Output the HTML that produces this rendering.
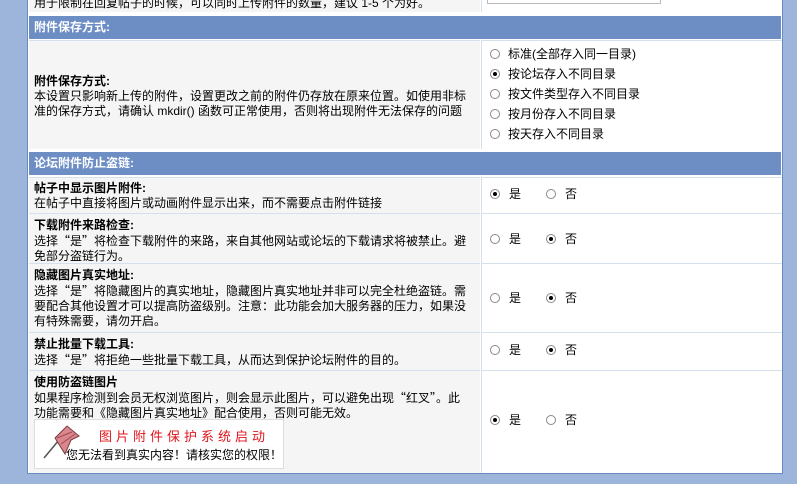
<!DOCTYPE html>
<html><head><meta charset="utf-8"><style>
body{margin:0;width:797px;height:484px;background:#9db5da;font-family:"Liberation Sans","Noto Sans CJK SC","WenQuanYi Zen Hei",sans-serif;font-size:12px;color:#000;position:relative;overflow:hidden}
.tbl{position:absolute;left:27px;top:-2px;width:754px;height:474px;background:#fff;border:1px solid #6a8ac2}
.h{position:absolute;left:1px;width:752px;height:23px;background:#6c8ec5;color:#fff;font-weight:bold;line-height:23px;text-indent:5px;font-size:12px}
.l{position:absolute;left:1px;width:451px;background:#f5f5f5;border-top:1px solid #d5dfee}
.r{position:absolute;left:453px;width:300px;background:#fff;border-top:1px solid #d5dfee;border-left:1px solid #d5dfee}
.t{position:absolute;left:5px;line-height:15px;width:438px}
.q{font-family:"Noto Sans CJK SC",sans-serif}
b{font-weight:bold}
.rd{position:absolute;width:10px;height:10px;border-radius:50%;border:1px solid #888;background:#fff;box-sizing:border-box}
.rd.on::after{content:"";position:absolute;left:2px;top:2px;width:4px;height:4px;border-radius:50%;background:#000}
.lb{position:absolute;line-height:15px}
</style></head><body>
<div class="tbl">
 <div class="l" style="top:0;height:13px;border:0"><div class="t" style="top:-3px">用于限制在回复帖子的时候，可以同时上传附件的数量，建议 1-5 个为好。</div></div>
 <div class="r" style="top:0;height:13px;border-top:0"><div style="position:absolute;left:5px;top:0;width:172px;height:4px;border:1px solid #bbb;border-top:0"></div></div>
 <div class="h" style="top:17px">附件保存方式:</div>
 <div class="l" style="top:41px;height:108px"><div class="t" style="top:33px"><b>附件保存方式:</b><br>本设置只影响新上传的附件，设置更改之前的附件仍存放在原来位置。如使用非标准的保存方式，请确认 mkdir() 函数可正常使用，否则将出现附件无法保存的问题</div></div>
 <div class="r" style="top:41px;height:108px"></div>
 <div class="h" style="top:153px">论坛附件防止盗链:</div>
 <div class="l" style="top:178px;height:35px"><div class="t" style="top:3px"><b>帖子中显示图片附件:</b><br>在帖子中直接将图片或动画附件显示出来，而不需要点击附件链接</div></div>
 <div class="r" style="top:178px;height:35px"></div>
 <div class="l" style="top:214px;height:49px"><div class="t" style="top:4px"><b>下载附件来路检查:</b><br>选择<span class="q">“是”</span>将检查下载附件的来路，来自其他网站或论坛的下载请求将被禁止。避免部分盗链行为。</div></div>
 <div class="r" style="top:214px;height:49px"></div>
 <div class="l" style="top:264px;height:68px"><div class="t" style="top:4px"><b>隐藏图片真实地址:</b><br>选择<span class="q">“是”</span>将隐藏图片的真实地址，隐藏图片真实地址并非可以完全杜绝盗链。需要配合其他设置才可以提高防盗级别。注意：此功能会加大服务器的压力，如果没有特殊需要，请勿开启。</div></div>
 <div class="r" style="top:264px;height:68px"></div>
 <div class="l" style="top:333px;height:37px"><div class="t" style="top:4px"><b>禁止批量下载工具:</b><br>选择<span class="q">“是”</span>将拒绝一些批量下载工具，从而达到保护论坛附件的目的。</div></div>
 <div class="r" style="top:333px;height:37px"></div>
 <div class="l" style="top:371px;height:102px"><div class="t" style="top:4px"><b>使用防盗链图片</b><br>如果程序检测到会员无权浏览图片，则会显示此图片，可以避免出现<span class="q">“红叉”</span>。此功能需要和《隐藏图片真实地址》配合使用，否则可能无效。</div>
  <div style="position:absolute;left:5px;top:48px;width:248px;height:48px;background:#fff;border:1px solid #ddd">
   <svg style="position:absolute;left:6px;top:4px" width="40" height="40" viewBox="0 0 40 40"><path d="M3 34 L18 16" stroke="#555" stroke-width="1.5"/><path d="M14 14 L26 2 L38 12 L30 16 L24 30 Z" fill="#d9868c" stroke="#7a3b40"/><path d="M16 14 L31 8 M20 20 L34 10" stroke="#a14b53"/></svg>
   <div style="position:absolute;left:64px;top:6px;color:#e0141c;font-size:13px;letter-spacing:4px">图片附件保护系统启动</div>
   <div style="position:absolute;left:31px;top:26px;font-size:12px">您无法看到真实内容！请核实您的权限！</div>
  </div></div>
 <div class="r" style="top:371px;height:102px"></div>
</div>
<div class="rd" style="left:490px;top:49px"></div><div class="lb" style="left:508px;top:47px">标准(全部存入同一目录)</div>
<div class="rd on" style="left:490px;top:69px"></div><div class="lb" style="left:508px;top:67px">按论坛存入不同目录</div>
<div class="rd" style="left:490px;top:89px"></div><div class="lb" style="left:508px;top:87px">按文件类型存入不同目录</div>
<div class="rd" style="left:490px;top:109px"></div><div class="lb" style="left:508px;top:107px">按月份存入不同目录</div>
<div class="rd" style="left:490px;top:129px"></div><div class="lb" style="left:508px;top:127px">按天存入不同目录</div>

<div class="rd on" style="left:490px;top:189px"></div><div class="lb" style="left:509px;top:187px">是</div>
<div class="rd" style="left:546px;top:189px"></div><div class="lb" style="left:565px;top:187px">否</div>
<div class="rd" style="left:490px;top:234px"></div><div class="lb" style="left:509px;top:232px">是</div>
<div class="rd on" style="left:546px;top:234px"></div><div class="lb" style="left:565px;top:232px">否</div>
<div class="rd" style="left:490px;top:293px"></div><div class="lb" style="left:509px;top:291px">是</div>
<div class="rd on" style="left:546px;top:293px"></div><div class="lb" style="left:565px;top:291px">否</div>
<div class="rd" style="left:490px;top:345px"></div><div class="lb" style="left:509px;top:343px">是</div>
<div class="rd on" style="left:546px;top:345px"></div><div class="lb" style="left:565px;top:343px">否</div>
<div class="rd on" style="left:490px;top:415px"></div><div class="lb" style="left:509px;top:413px">是</div>
<div class="rd" style="left:546px;top:415px"></div><div class="lb" style="left:565px;top:413px">否</div>
</body></html>
